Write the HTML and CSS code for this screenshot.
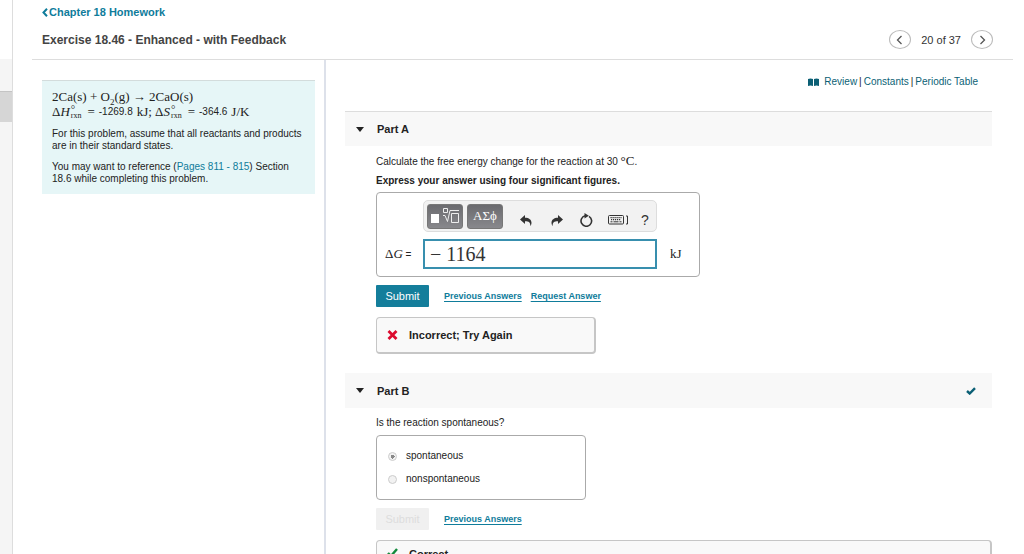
FILE: index.html
```html
<!DOCTYPE html>
<html lang="en">
<head>
<meta charset="utf-8">
<meta name="viewport" content="width=device-width, initial-scale=1">
<title>Exercise 18.46 - Enhanced - with Feedback</title>
<link rel="stylesheet" href="styles.css">
</head>
<body>
<div class="app">
  <aside class="rail"><div class="rail-track"><div class="rail-thumb"></div></div></aside>
  <div class="page">
    <header class="header">
      <a class="back" href="#"><svg class="back-icon" viewBox="0 0 6 9"><path d="M5 .8 1.5 4.5 5 8.2" fill="none" stroke="currentColor" stroke-width="2"/></svg>Chapter 18 Homework</a>
      <div class="title-row">
        <h1 class="title">Exercise 18.46 - Enhanced - with Feedback</h1>
        <nav class="pager" aria-label="Items">
          <button class="pager-btn" type="button" aria-label="Previous item"><svg width="8" height="10" viewBox="0 0 8 10"><path d="M5.5 1 1.5 5l4 4" fill="none" stroke="currentColor" stroke-width="1.3"/></svg></button>
          <span class="pager-text">20 of 37</span>
          <button class="pager-btn" type="button" aria-label="Next item"><svg width="8" height="10" viewBox="0 0 8 10"><path d="m2.500 1 4 4-4 4" fill="none" stroke="currentColor" stroke-width="1.3"/></svg></button>
        </nav>
      </div>
    </header>
    <div class="columns">
      <section class="intro">
        <div class="intro-box">
          <p class="equation"><span class="math">2Ca(s) + O<sub class="low">2</sub>(g) → 2CaO(s)</span></p>
          <p class="equation values"><span class="math">Δ<i>H</i></span><span class="scripts"><span class="degree">°</span><span>rxn</span></span><span class="math">=</span> -1269.8 <span class="math">kJ; Δ<i>S</i></span><span class="scripts"><span class="degree">°</span><span>rxn</span></span><span class="math">=</span> -364.6 <span class="math">J/K</span></p>
          <p class="intro-text">For this problem, assume that all reactants and products are in their standard states.</p>
          <p class="intro-text">You may want to reference (<a class="plain-link" href="#">Pages 811 - 815</a>) Section 18.6 while completing this problem.</p>
        </div>
      </section>
      <main class="work">
        <nav class="resources" aria-label="Resources">
          <svg class="book" viewBox="0 0 11 9"><path d="M0 1q2.500-1 5 0v7q-2.500-1-5 0zM6 1q2.500-1 5 0v7q-2.500-1-5 0z" fill="currentColor"/></svg>
          <a class="resource" href="#">Review</a><span class="bar">|</span><a class="resource" href="#">Constants</a><span class="bar">|</span><a class="resource" href="#">Periodic Table</a>
        </nav>
        <section>
          <div class="part-head ruled">
            <svg class="caret" viewBox="0 0 8 5"><path d="M0 0h8L4 5z" fill="currentColor"/></svg>
            <h2 class="part-title">Part A</h2>
          </div>
          <div class="part-body">
            <p class="prompt">Calculate the free energy change for the reaction at 30 <span class="math">°C</span>.</p>
            <p class="prompt strong">Express your answer using four significant figures.</p>
            <div class="answer">
              <div class="toolbar">
                <button class="tool-key" type="button" aria-label="Templates"><svg width="28" height="16" viewBox="0 0 28 16"><path d="M0 6h8v9H0z" fill="#fff"/><path d="M12.500.5h4v4h-4zM12 7.500l2 0 2.500 6L19 2.500h9M20.500 5.500h7v9h-7z" fill="none" stroke="#eee"/></svg></button>
                <button class="tool-key greek" type="button">ΑΣϕ</button>
                <button class="tool undo" type="button" aria-label="Undo"><svg width="12" height="11" viewBox="0 0 12 11"><path d="M0 4.500 5 0v2.700c4 0 6.500 2 6.500 5 0 1.500-.6 2.500-1.200 3.300C10.500 7.700 9 6.300 5 6.300V9z" fill="currentColor"/></svg></button>
                <button class="tool redo" type="button" aria-label="Redo"><svg width="12" height="11" viewBox="0 0 12 11"><path d="M12 4.500 7 0v2.700C3 2.700.5 4.700.5 7.700c0 1.500.6 2.500 1.200 3.300C1.500 7.700 3 6.300 7 6.300V9z" fill="currentColor"/></svg></button>
                <button class="tool reset" type="button" aria-label="Reset"><svg width="13" height="14" viewBox="0 0 13 14"><path d="M9 3.400A5.300 5.300 0 1 1 5.200 2.800" fill="none" stroke="currentColor" stroke-width="1.600"/><path d="M4.500 0v5.400l4.300-2.600z" fill="currentColor"/></svg></button>
                <button class="tool keys" type="button" aria-label="Keyboard shortcuts"><svg width="21" height="10" viewBox="0 0 21 10"><rect x=".5" y=".5" width="15" height="8.500" rx="1" fill="none" stroke="currentColor"/><path d="M2.500 2.700h11M3 4.700h10" stroke="currentColor" stroke-width="1.200" stroke-dasharray="1.200 .8"/><path d="M2.500 6.800h2M5.500 6.800h5M11.500 6.800h2" stroke="currentColor"/><path d="M18 1h1.500v8H18" fill="none" stroke="currentColor"/></svg></button>
                <button class="tool help" type="button" aria-label="Help">?</button>
              </div>
              <label class="answer-label" for="dg"><span class="math">Δ<i>G</i></span> =</label>
              <input class="answer-input" id="dg" type="text" value="− 1164">
              <span class="math unit">kJ</span>
            </div>
            <div class="actions">
              <button class="submit" type="button">Submit</button>
              <a class="action-link" href="#">Previous Answers</a>
              <a class="action-link" href="#">Request Answer</a>
            </div>
            <div class="feedback narrow">
              <svg class="mark wrong" viewBox="0 0 11 10"><path d="m1.500 1 8 8M9.500 1l-8 8" stroke="currentColor" stroke-width="2.800"/></svg>
              <span>Incorrect; Try Again</span>
            </div>
          </div>
        </section>
        <section class="part-b">
          <div class="part-head">
            <svg class="caret" viewBox="0 0 8 5"><path d="M0 0h8L4 5z" fill="currentColor"/></svg>
            <h2 class="part-title">Part B</h2>
            <svg class="done" viewBox="0 0 10 8"><path d="m1 4 2.700 2.500L9 1.200" fill="none" stroke="currentColor" stroke-width="2.400"/></svg>
          </div>
          <div class="part-body">
            <p class="prompt">Is the reaction spontaneous?</p>
            <div class="choices">
              <label class="choice"><input class="radio" type="radio" name="b" checked disabled>spontaneous</label>
              <label class="choice"><input class="radio" type="radio" name="b" disabled>nonspontaneous</label>
            </div>
            <div class="actions">
              <button class="submit" type="button" disabled>Submit</button>
              <a class="action-link" href="#">Previous Answers</a>
            </div>
            <div class="feedback detailed">
              <svg class="mark right" viewBox="0 0 11 10"><path d="m1 5 3 3 6-7" fill="none" stroke="currentColor" stroke-width="2.400"/></svg>
              <span>Correct</span>
            </div>
          </div>
        </section>
      </main>
    </div>
  </div>
</div>
</body>
</html>
```
FILE: styles.css
```css
* { box-sizing: border-box; }
body {
  margin: 0;
  background: #fff;
  color: #222;
  font: 10px/12px "Liberation Sans", Arial, sans-serif;
}
h1, h2, p { margin: 0; }
a { color: #0f7c9b; }
button { font-family: inherit; cursor: pointer; }
svg { display: block; flex: none; }
.math { font-family: "Liberation Serif", "Times New Roman", serif; font-size: 13px; }

.app { display: flex; height: 100vh; overflow: hidden; }
.rail { flex: none; width: 13px; padding-top: 59px; border-right: 1px solid #ddd; }
.rail-track { height: 100%; padding-top: 32px; background: #f5f5f5; }
.rail-thumb { height: 31px; background: #d6d6d6; border-top: 1px solid #c4c4c4; }
.page { flex: 1; min-width: 0; display: flex; flex-direction: column; margin: 0 11px 0 19px; }

.header { flex: none; padding: 6px 20px 10px 10px; border-bottom: 1px solid #ddd; }
.back { display: flex; align-items: center; gap: 1px; font-size: 11px; font-weight: bold; text-decoration: none; }
.back-icon { width: 6px; height: 9px; }
.title-row { display: flex; justify-content: space-between; align-items: center; margin-top: 12px; }
.title { font-size: 12px; line-height: 18px; color: #444; }
.pager { display: flex; align-items: center; gap: 10px; }
.pager-text { font-size: 11px; color: #333; }
.pager-btn {
  display: flex; align-items: center; justify-content: center;
  width: 22px; height: 19px; padding: 0;
  border: 1px solid #bbb; border-radius: 50%;
  background: #fff; color: #555;
}

.columns { flex: 1; min-height: 0; display: flex; }
.intro { flex: none; width: 294px; padding: 20px 9px 0 10px; border-right: 2px solid #dde1ea; }
.intro-box { padding: 9px 10px; background: #e6f6f7; border-top: 1px solid #d3dcdc; }
.equation { line-height: 14px; white-space: nowrap; }
.equation + .intro-text { margin-top: 9px; }
.intro-text + .intro-text { margin-top: 9px; }
.low { font-size: 9px; line-height: 0; }
.values { display: flex; align-items: center; gap: 4px; }
.scripts { display: inline-flex; flex-direction: column; margin: 0 2px 0 -3px; font: 8px/6px "Liberation Serif", serif; }
.degree { font-size: 11px; line-height: 8px; }
.plain-link { text-decoration: none; }

.work { flex: 1; min-width: 0; padding: 16px 21px 0 19px; }
.resources { display: flex; justify-content: flex-end; align-items: center; padding-right: 14px; margin-bottom: 23px; }
.book { width: 11px; height: 9px; margin-right: 5px; color: #0b5f75; }
.resource { color: #0b5f75; text-decoration: none; }
.bar { padding: 0 2px; }

.part-head { display: flex; align-items: center; height: 35px; padding: 0 16px 0 11px; background: #f8f8f8; }
.ruled { border-top: 1px solid #ddd; }
.caret { width: 8px; height: 5px; margin-right: 13px; }
.part-title { font-size: 11px; }
.done { width: 10px; height: 8px; margin-left: auto; color: #0b5f75; }
.part-body { padding: 8px 0 0 31px; }
.part-b { margin-top: 19px; }
.prompt { line-height: 13px; }
.strong { margin-top: 6px; font-weight: bold; }

.answer {
  display: grid; grid-template-columns: 38px 234px auto; row-gap: 7px; align-items: center;
  width: 324px; margin-top: 5px; padding: 7px 8px;
  border: 1px solid #aaa; border-radius: 4px;
}
.toolbar {
  grid-column: 2; display: flex; align-items: center; height: 32px; padding: 0 3px;
  background: #f2f2f2; border: 1px solid #ddd; border-radius: 5px;
}
.answer-label { grid-column: 1; }
.tool-key {
  display: flex; align-items: center; justify-content: center; width: 36px; height: 25px; padding: 0;
  border: 1px solid #777; border-radius: 3px;
  background: linear-gradient(#6b6b6f, #88888c); color: #fff;
}
.greek { margin-left: 4px; font: 13px "Liberation Serif", serif; }
.tool { display: flex; padding: 8px 0 0; border: 0; background: none; color: #333; }
.undo { margin-left: 17px; }
.redo { margin-left: 19px; }
.reset { margin-left: 17px; }
.keys { margin-left: 15px; }
.help { margin-left: 12px; font-size: 14px; line-height: 16px; }
.answer-input {
  width: 100%; height: 30px; padding: 0 5px;
  border: 2px solid #388fae; border-radius: 0; background: #fff; color: #333;
  font: 20px "Liberation Serif", serif;
}
.unit { padding-left: 13px; }

.actions { display: flex; align-items: center; margin-top: 8px; }
.submit {
  width: 53px; height: 22px; margin-right: 15px; padding: 0;
  border: 0; border-radius: 1px; background: #147e9b; color: #fff; font-size: 11px;
}
.submit:disabled { background: #f0f0f0; color: #ddd; }
.action-link { margin-right: 9px; font-size: 9px; font-weight: bold; text-underline-offset: 2px; }
.feedback {
  display: flex; align-items: center; gap: 11px; min-height: 37px; margin-top: 10px; padding: 0 10px;
  border: 1px solid #c6c6c6; border-right-width: 2px; border-bottom-width: 2px; border-radius: 4px;
  background: #f9f9f9; font-size: 11px; font-weight: bold;
}
.narrow { width: 220px; }
.detailed { align-items: flex-start; padding-top: 7px; }
.mark { width: 11px; height: 10px; }
.wrong { color: #dc0a2d; }
.right { color: #138a3c; }
.choices {
  display: flex; flex-direction: column; gap: 11px;
  width: 210px; margin-top: 6px; padding: 14px 11px;
  border: 1px solid #aaa; border-radius: 4px;
}
.choice { display: flex; align-items: center; gap: 9px; }
.radio {
  appearance: none; width: 9px; height: 9px; margin: 0;
  border: 1px solid #ccc; border-radius: 50%; background: #f2f2f2;
}
.radio:checked { background: radial-gradient(circle, #888 0 2px, #f2f2f2 2px); }
```
